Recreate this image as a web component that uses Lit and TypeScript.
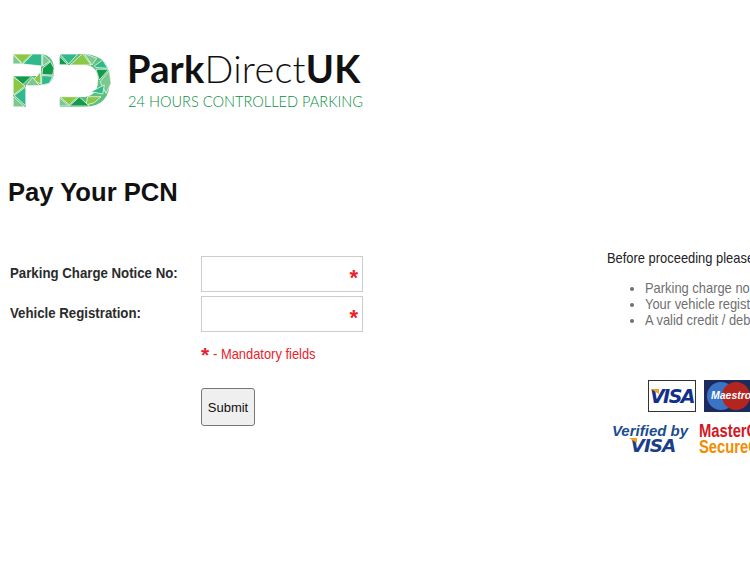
import { LitElement, html, css, svg } from "lit";
import { customElement } from "lit/decorators.js";

const G = { teal: "#31b98b", lime: "#8cc846", dark: "#149a4c", sage: "#7cc88f" };
const tris: [string, string][] = [
  ["13.3,54 31.7,54 22.3,63.3", G.lime],
  ["13,54.5 21.7,63.8 13,63.8", G.sage],
  ["32.7,54 41.7,54 41.7,66 23,64", G.teal],
  ["42.7,54.5 50,61 42.7,66", G.sage],
  ["42.7,68.3 50.5,61.7 54,68.3 52.7,75 42,74.5", G.dark],
  ["41.7,75.5 52.7,76.2 49.3,83.3 41.7,85", G.teal],
  ["33.3,80 40.7,71.7 40.7,84", G.lime],
  ["26,85.7 32.7,77.3 39.3,85.7", G.sage],
  ["13.3,76 31.7,76 22.7,84.7", G.dark],
  ["13.3,76.7 25,86 13.3,95", G.lime],
  ["14.3,95.5 25.7,87 25.7,105.7", G.teal],
  ["13.3,96.5 24.5,106.7 13.3,106.7", G.sage],
  ["60,54 77.7,54 68.7,64", G.teal],
  ["59.3,56 67.7,64.7 59.3,64.7", G.dark],
  ["70,65 82.7,53.5 91,65", G.lime],
  ["84.3,53.5 96.7,58.3 92,65", G.sage],
  ["94.3,66 102.7,60 107.7,68.3 96,67.5", G.teal],
  ["96,69.3 108.7,69.3 99.3,80", G.dark],
  ["109.3,70.7 111,83.3 106,93.3 100,81.7", G.sage],
  ["91,91.7 104.3,85 102.7,94", G.teal],
  ["87.7,96.7 101,96.7 94.3,102.7 86,105", G.lime],
  ["69.3,106 79.3,97 89.3,106", G.dark],
  ["59.3,97.5 68.7,106 59.3,106", G.sage],
  ["60,96.7 77.7,96.7 69.3,105", G.lime],
];

@customElement("app-root")
export class AppRoot extends LitElement {
  static styles = css`
    :host { display: block; width: 750px; height: 563px; overflow: hidden; background: #fff; font-family: "Liberation Sans", Arial, sans-serif; color: #222; }
    .logo { display: flex; height: 108px; padding: 53px 0 0 13px; box-sizing: border-box; gap: 16px; }
    .mark { width: 98px; height: 55px; flex: none; }
    .brand { font-family: Lato, sans-serif; display: flex; flex-direction: column; margin-top: -4px; }
    .name { font-size: 38px; line-height: 38px; color: #111; letter-spacing: 0.2px; font-weight: 300; }
    .name b { font-weight: 700; }
    .tag { font-size: 14.6px; line-height: 18px; margin: 6px 0 0 1px; color: #0c8f42; font-weight: 300; }
    h1 { margin: 70px 0 0 8px; font-size: 25.6px; line-height: 29px; font-weight: 700; color: #111; }
    .cols { display: flex; margin-top: 49px; }
    .form { width: 607px; flex: none; padding-left: 10px; box-sizing: border-box; }
    .row { display: flex; height: 36px; margin-bottom: 4px; }
    label { width: 191px; flex: none; font-size: 14.5px; font-weight: 700; color: #2b2b2b; line-height: 16px; padding-top: 9px; white-space: nowrap; }
    label span { display: inline-block; transform: scaleX(.913); transform-origin: left; }
    .inp { position: relative; width: 162px; height: 36px; border: 1px solid #ccc; box-sizing: border-box; background: #fff; }
    .star { color: #f0202a; font-size: 22px; font-weight: 700; line-height: 22px; position: absolute; right: 4px; top: 10px; }
    .note { margin: 12px 0 0 191px; color: #e8222c; font-size: 14.5px; line-height: 20px; white-space: nowrap; display: flex; gap: 4px; align-items: baseline; }
    .note span { font-size: 21px; font-weight: 700; line-height: 16px; position: relative; top: 3px; }
    .sq { display: inline-block; transform: scaleX(.89); transform-origin: left; }
    button { display: block; margin: 24px 0 0 191px; width: 54px; height: 38px; padding: 0; border: 1px solid #767676; border-radius: 3px; background: #efefef; font: 13px "Liberation Sans", Arial, sans-serif; color: #111; }
    .info { width: 300px; flex: none; font-size: 14.5px; line-height: 16px; color: #222; white-space: nowrap; margin-top: -6px; }
    ul { margin: 14px 0 0; padding-left: 38px; color: #707070; }
    .cards { display: flex; gap: 8px; margin: 52px 0 0 41px; }
    .visa { position: relative; width: 48px; height: 32px; box-sizing: border-box; border: 1px solid #333; background: #fff; display: flex; align-items: center; justify-content: center; font: italic 700 19px "DejaVu Sans", sans-serif; color: #12308a; letter-spacing: -1.5px; }
    .flick { position: absolute; width: 8px; height: 5px; background: #f2a11f; clip-path: polygon(0 0, 100% 0, 100% 100%); }
    .visa .flick { left: 2px; top: 8px; }
    .maestro { width: 50px; height: 32px; background: #1c2a5e; position: relative; color: #fff; flex: none; }
    .maestro i { position: absolute; top: 2px; width: 28px; height: 28px; border-radius: 50%; }
    .maestro i.a { left: 3px; background: #3b74c4; }
    .maestro i.b { left: 18px; background: #b3251f; }
    .maestro span { position: absolute; left: 7px; top: 9px; font: italic 700 10.5px "Liberation Sans", sans-serif; }
    .logos { display: flex; gap: 10px; margin: 11px 0 0 4px; }
    .vbv { position: relative; font: italic 700 15px/15px "Liberation Sans", sans-serif; color: #1a4c8e; text-align: center; width: 78px; flex: none; }
    .vbv b { display: block; font: italic 700 18.5px/15px "DejaVu Sans", sans-serif; letter-spacing: -1px; color: #1a3f88; padding-left: 6px; }
    .vbv .flick { left: 18px; top: 15px; }
    .sc { font: 700 18px/15px "Liberation Sans", sans-serif; color: #d3171f; transform: scaleX(.82); transform-origin: left; padding-top: 1px; }
    .sc b { display: block; color: #f28c00; margin-top: 1px; }
  `;

  render() {
    return html`
      <div class="logo">
        <svg class="mark" viewBox="13 53 98 55">
          <path d="M13,54 H42 Q54,56 54,70 Q54,85 42,85 H26 V107 H13 V76 H41 V64 H13 Z" fill="#5cc07f"/>
          <path d="M60,54 H85 Q110,56 110,80 Q110,106 85,107 H60 V97 H85 Q98,95 98,80 Q98,66 85,65 H60 Z" fill="#5cc07f"/>
          ${tris.map(([p, f]) => svg`<polygon points=${p} fill=${f} stroke="#fff" stroke-width=".7"/>`)}
        </svg>
        <div class="brand">
          <div class="name"><b>Park</b>Direct<b>UK</b></div>
          <div class="tag">24 HOURS CONTROLLED PARKING</div>
        </div>
      </div>
      <h1>Pay Your PCN</h1>
      <div class="cols">
        <div class="form">
          <div class="row"><label><span>Parking Charge Notice No:</span></label><div class="inp"><span class="star">*</span></div></div>
          <div class="row"><label><span>Vehicle Registration:</span></label><div class="inp"><span class="star">*</span></div></div>
          <div class="note"><span>*</span><div class="sq">- Mandatory fields</div></div>
          <button>Submit</button>
        </div>
        <div class="info">
          <div class="sq">Before proceeding please ensure you have:</div>
          <ul>
            <li><div class="sq">Parking charge notice number</div></li>
            <li><div class="sq">Your vehicle registration</div></li>
            <li><div class="sq">A valid credit / debit card</div></li>
          </ul>
          <div class="cards">
            <div class="visa"><i class="flick"></i>VISA</div>
            <div class="maestro"><i class="a"></i><i class="b"></i><span>Maestro</span></div>
          </div>
          <div class="logos">
            <div class="vbv"><i class="flick"></i>Verified by<b>VISA</b></div>
            <div class="sc">MasterCard.<b>SecureCode.</b></div>
          </div>
        </div>
      </div>
    `;
  }
}
